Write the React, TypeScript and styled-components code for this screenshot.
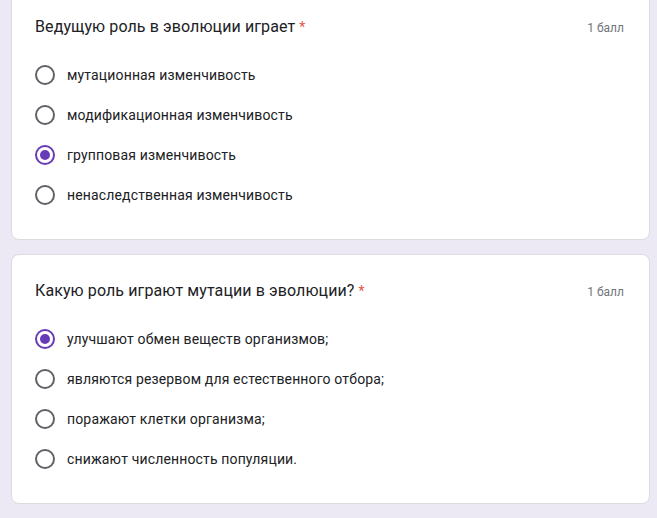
import React from "react";
import styled, { createGlobalStyle } from "styled-components";

const Global = createGlobalStyle`
  html, body { margin: 0; padding: 0; background: #ece9f5; }
  body { font-family: Roboto, "Noto Sans", Arial, sans-serif; }
`;

const Page = styled.div`
  width: 657px;
  height: 518px;
  overflow: hidden;
  box-sizing: border-box;
  padding: 0 7px 0 11px;
  display: flex;
  flex-direction: column;
  gap: 14px;
  background: #ece9f5;
`;

const Card = styled.section<{ $offset?: number }>`
  flex: none;
  background: #fff;
  border: 1px solid #dadce0;
  border-radius: 8px;
  padding: 23px 24px 24px 23px;
  margin-top: ${(p) => p.$offset ?? 0}px;
`;

const Header = styled.div`
  display: flex;
  align-items: center;
  justify-content: space-between;
  height: 24px;
`;

const Title = styled.div`
  font-size: 16px;
  color: #202124;
  letter-spacing: 0.1px;
`;

const Star = styled.span`
  color: #e2574c;
  font-size: 14px;
  margin-left: 4px;
`;

const Points = styled.div`
  font-size: 12px;
  color: #70757a;
  margin-right: 1px;
  padding-top: 3px;
`;

const Options = styled.div`
  display: flex;
  flex-direction: column;
  margin-top: 17px;
`;

const Option = styled.label`
  display: flex;
  align-items: center;
  height: 40px;
  gap: 12px;
  font-size: 14px;
  color: #202124;
  letter-spacing: 0.15px;
`;

const Radio = styled.span<{ $checked?: boolean }>`
  width: 20px;
  height: 20px;
  box-sizing: border-box;
  border-radius: 50%;
  border: 2px solid ${(p) => (p.$checked ? "#673ab7" : "#5f6368")};
  display: flex;
  align-items: center;
  justify-content: center;
  &::after {
    content: "";
    width: 10px;
    height: 10px;
    border-radius: 50%;
    background: #673ab7;
    display: ${(p) => (p.$checked ? "block" : "none")};
  }
`;

const questions = [
  {
    title: "Ведущую роль в эволюции играет",
    offset: -10,
    options: [
      "мутационная изменчивость",
      "модификационная изменчивость",
      "групповая изменчивость",
      "ненаследственная изменчивость",
    ],
    checked: 2,
  },
  {
    title: "Какую роль играют мутации в эволюции?",
    offset: 0,
    options: [
      "улучшают обмен веществ организмов;",
      "являются резервом для естественного отбора;",
      "поражают клетки организма;",
      "снижают численность популяции.",
    ],
    checked: 0,
  },
];

export default function App() {
  return (
    <>
      <Global />
      <Page>
        {questions.map((q) => (
          <Card key={q.title} $offset={q.offset}>
            <Header>
              <Title>
                {q.title}
                <Star>*</Star>
              </Title>
              <Points>1 балл</Points>
            </Header>
            <Options>
              {q.options.map((o, i) => (
                <Option key={o}>
                  <Radio $checked={i === q.checked} />
                  {o}
                </Option>
              ))}
            </Options>
          </Card>
        ))}
        <Card />
      </Page>
    </>
  );
}
